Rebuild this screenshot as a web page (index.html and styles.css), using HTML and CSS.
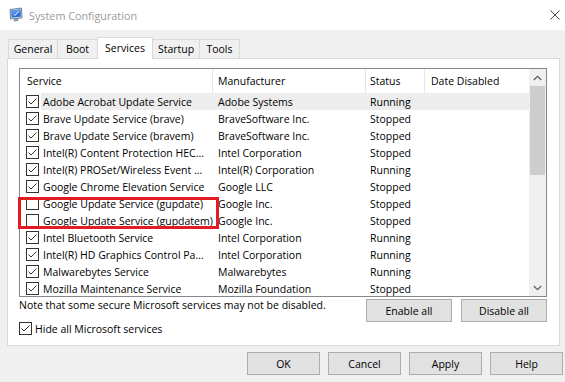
FILE: index.html
```html
<!DOCTYPE html>
<html>
<head>
<meta charset="utf-8">
<title>System Configuration</title>
<link rel="stylesheet" href="styles.css">
</head>
<body>
<div class="titlebar">
  <svg class="app-icon" viewBox="0 0 16 16" width="16" height="16">
    <path d="M2 2.5 L13.5 1 L14 11 L2.5 12 Z" fill="#c9d3e3" stroke="#5b6b86" stroke-width="0.8"/>
    <path d="M3.3 3.5 L12.5 2.4 L12.8 9.8 L3.6 10.6 Z" fill="#2f6fd6"/>
    <path d="M3.3 3.5 L12.5 2.4 L12.6 5 L3.4 7 Z" fill="#5d95ea"/>
    <path d="M5.5 7 L7 8.5 L10.5 4.5" fill="none" stroke="#ffffff" stroke-width="1"/>
    <path d="M6 12 L10 11.7 L10.5 14 L5.5 14.4 Z" fill="#8c97a8"/>
  </svg>
  <span class="title">System Configuration</span>
  <svg class="close" viewBox="0 0 10 10" width="10" height="10">
    <path d="M0.5 0.5 L9.5 9.5 M9.5 0.5 L0.5 9.5" stroke="#333" stroke-width="0.9" fill="none"/>
  </svg>
</div>

<div class="tabs">
  <div class="tab tab-general">General</div>
  <div class="tab tab-boot">Boot</div>
  <div class="tab tab-services active">Services</div>
  <div class="tab tab-startup">Startup</div>
  <div class="tab tab-tools">Tools</div>
</div>

<div class="panel">
  <div class="listview">
    <div class="lv-body">
      <div class="lv-header">
        <div class="h h1">Service</div>
        <div class="h h2">Manufacturer</div>
        <div class="h h3">Status</div>
        <div class="h h4">Date Disabled</div>
      </div>
      <div class="lv-rows">
        <div class="row">
          <div class="cb-cell"><span class="cb checked"><svg viewBox="0 0 11 11" width="11" height="11"><path d="M1.5 5.5 L4 8 L9.5 2.5" fill="none" stroke="#333" stroke-width="1"/></svg></span></div>
          <div class="row-main selected"><span class="c1">Adobe Acrobat Update Service</span><span class="c2">Adobe Systems</span><span class="c3">Running</span><span class="c4"></span></div>
        </div>
        <div class="row">
          <div class="cb-cell"><span class="cb checked"><svg viewBox="0 0 11 11" width="11" height="11"><path d="M1.5 5.5 L4 8 L9.5 2.5" fill="none" stroke="#333" stroke-width="1"/></svg></span></div>
          <div class="row-main"><span class="c1">Brave Update Service (brave)</span><span class="c2">BraveSoftware Inc.</span><span class="c3">Stopped</span><span class="c4"></span></div>
        </div>
        <div class="row">
          <div class="cb-cell"><span class="cb checked"><svg viewBox="0 0 11 11" width="11" height="11"><path d="M1.5 5.5 L4 8 L9.5 2.5" fill="none" stroke="#333" stroke-width="1"/></svg></span></div>
          <div class="row-main"><span class="c1">Brave Update Service (bravem)</span><span class="c2">BraveSoftware Inc.</span><span class="c3">Stopped</span><span class="c4"></span></div>
        </div>
        <div class="row">
          <div class="cb-cell"><span class="cb checked"><svg viewBox="0 0 11 11" width="11" height="11"><path d="M1.5 5.5 L4 8 L9.5 2.5" fill="none" stroke="#333" stroke-width="1"/></svg></span></div>
          <div class="row-main"><span class="c1">Intel(R) Content Protection HEC…</span><span class="c2">Intel Corporation</span><span class="c3">Stopped</span><span class="c4"></span></div>
        </div>
        <div class="row">
          <div class="cb-cell"><span class="cb checked"><svg viewBox="0 0 11 11" width="11" height="11"><path d="M1.5 5.5 L4 8 L9.5 2.5" fill="none" stroke="#333" stroke-width="1"/></svg></span></div>
          <div class="row-main"><span class="c1">Intel(R) PROSet/Wireless Event …</span><span class="c2">Intel(R) Corporation</span><span class="c3">Running</span><span class="c4"></span></div>
        </div>
        <div class="row">
          <div class="cb-cell"><span class="cb checked"><svg viewBox="0 0 11 11" width="11" height="11"><path d="M1.5 5.5 L4 8 L9.5 2.5" fill="none" stroke="#333" stroke-width="1"/></svg></span></div>
          <div class="row-main"><span class="c1">Google Chrome Elevation Service</span><span class="c2">Google LLC</span><span class="c3">Stopped</span><span class="c4"></span></div>
        </div>
        <div class="row">
          <div class="cb-cell"><span class="cb"></span></div>
          <div class="row-main"><span class="c1">Google Update Service (gupdate)</span><span class="c2">Google Inc.</span><span class="c3">Stopped</span><span class="c4"></span></div>
        </div>
        <div class="row">
          <div class="cb-cell"><span class="cb"></span></div>
          <div class="row-main"><span class="c1">Google Update Service (gupdatem)</span><span class="c2">Google Inc.</span><span class="c3">Stopped</span><span class="c4"></span></div>
        </div>
        <div class="row">
          <div class="cb-cell"><span class="cb checked"><svg viewBox="0 0 11 11" width="11" height="11"><path d="M1.5 5.5 L4 8 L9.5 2.5" fill="none" stroke="#333" stroke-width="1"/></svg></span></div>
          <div class="row-main"><span class="c1">Intel Bluetooth Service</span><span class="c2">Intel Corporation</span><span class="c3">Running</span><span class="c4"></span></div>
        </div>
        <div class="row">
          <div class="cb-cell"><span class="cb checked"><svg viewBox="0 0 11 11" width="11" height="11"><path d="M1.5 5.5 L4 8 L9.5 2.5" fill="none" stroke="#333" stroke-width="1"/></svg></span></div>
          <div class="row-main"><span class="c1">Intel(R) HD Graphics Control Pa…</span><span class="c2">Intel Corporation</span><span class="c3">Running</span><span class="c4"></span></div>
        </div>
        <div class="row">
          <div class="cb-cell"><span class="cb checked"><svg viewBox="0 0 11 11" width="11" height="11"><path d="M1.5 5.5 L4 8 L9.5 2.5" fill="none" stroke="#333" stroke-width="1"/></svg></span></div>
          <div class="row-main"><span class="c1">Malwarebytes Service</span><span class="c2">Malwarebytes</span><span class="c3">Running</span><span class="c4"></span></div>
        </div>
        <div class="row">
          <div class="cb-cell"><span class="cb checked"><svg viewBox="0 0 11 11" width="11" height="11"><path d="M1.5 5.5 L4 8 L9.5 2.5" fill="none" stroke="#333" stroke-width="1"/></svg></span></div>
          <div class="row-main"><span class="c1">Mozilla Maintenance Service</span><span class="c2">Mozilla Foundation</span><span class="c3">Stopped</span><span class="c4"></span></div>
        </div>
      </div>
    </div>
    <div class="scrollbar">
      <div class="sb-btn"><svg viewBox="0 0 9 6" width="9" height="6"><path d="M0.8 5 L4.5 1.3 L8.2 5" fill="none" stroke="#606060" stroke-width="1.3"/></svg></div>
      <div class="sb-track"><div class="sb-thumb"></div></div>
      <div class="sb-btn"><svg viewBox="0 0 9 6" width="9" height="6"><path d="M0.8 1 L4.5 4.7 L8.2 1" fill="none" stroke="#606060" stroke-width="1.3"/></svg></div>
    </div>
    <div class="mark-box"></div>
  </div>

  <div class="actions">
    <span class="note">Note that some secure Microsoft services may not be disabled.</span>
    <div class="action-btns">
      <button class="btn btn-wide">Enable all</button>
      <button class="btn btn-wide">Disable all</button>
    </div>
  </div>

  <div class="hide-row">
    <span class="cb checked"><svg viewBox="0 0 11 11" width="11" height="11"><path d="M1.5 5.5 L4 8 L9.5 2.5" fill="none" stroke="#333" stroke-width="1"/></svg></span>
    <span class="hide-label">Hide all Microsoft services</span>
  </div>
</div>

<div class="footer">
  <button class="btn">OK</button>
  <button class="btn">Cancel</button>
  <button class="btn">Apply</button>
  <button class="btn">Help</button>
</div>
</body>
</html>
```

FILE: styles.css
```css
* { box-sizing: border-box; }
html, body { margin: 0; padding: 0; }
body {
  width: 565px;
  height: 382px;
  overflow: hidden;
  background: #f0f0f0;
  font-family: "Open Sans", "Noto Sans", sans-serif;
  font-size: 10.5px;
  color: #000;
}

/* title bar */
.titlebar {
  height: 30px;
  background: #fff;
  display: flex;
  align-items: center;
  padding-left: 8px;
}
.app-icon { flex: none; }
.title {
  margin-left: 5px;
  color: #9a9a9a;
  font-size: 10.8px;
}
.close {
  margin-left: auto;
  margin-right: 5px;
  flex: none;
}

/* tabs */
.tabs {
  display: flex;
  align-items: flex-end;
  height: 21px;
  margin-top: 7px;
  padding-left: 8px;
}
.tab {
  height: 19px;
  border: 1px solid #d9d9d9;
  border-bottom: none;
  margin-right: -1px;
  display: flex;
  align-items: center;
  justify-content: center;
  background: #f0f0f0;
  white-space: nowrap;
}
.tab-general { width: 50px; }
.tab-boot { width: 41px; }
.tab-services { width: 56px; }
.tab-startup { width: 48px; }
.tab-tools { width: 41px; }
.tab.active {
  height: 22px;
  background: #fff;
  margin-bottom: -1px;
  padding-bottom: 2px;
  position: relative;
  z-index: 1;
}

/* panel */
.panel {
  margin-left: 7px;
  width: 553px;
  height: 288px;
  background: #fff;
  border: 1px solid #d9d9d9;
  padding: 9px 0 0 11px;
}

/* list view */
.listview {
  width: 528px;
  height: 229px;
  border: 1px solid #828790;
  display: flex;
  position: relative;
}
.lv-body {
  flex: 1;
  overflow: hidden;
  display: flex;
  flex-direction: column;
}
.lv-header {
  height: 24px;
  flex: none;
  display: flex;
}
.h {
  display: flex;
  align-items: center;
  border-right: 1px solid #e5e5e5;
  white-space: nowrap;
  color: #000;
}
.h1 { width: 193px; padding-left: 7px; }
.h2 { width: 153px; padding-left: 5px; }
.h3 { width: 59px; padding-left: 4px; }
.h4 { flex: 1; padding-left: 6px; border-right: none; }

.row {
  height: 17px;
  flex: none;
  display: flex;
  align-items: center;
}
.cb-cell {
  width: 21px;
  height: 17px;
  padding-left: 6px;
  display: flex;
  align-items: center;
  flex: none;
}
.cb {
  width: 13px;
  height: 13px;
  border: 1px solid #333;
  background: #fff;
  display: flex;
  align-items: center;
  justify-content: center;
  flex: none;
}
.cb svg { display: block; }
.row-main {
  flex: 1;
  height: 17px;
  display: flex;
  align-items: center;
  white-space: nowrap;
}
.row-main.selected { background: #ededed; }
.c1 { width: 172px; padding-left: 2px; flex: none; overflow: hidden; }
.c2 { width: 153px; padding-left: 5px; flex: none; overflow: hidden; }
.c3 { width: 59px; padding-left: 4px; flex: none; }
.c4 { flex: 1; }

/* scrollbar */
.scrollbar {
  width: 17px;
  flex: none;
  background: #f0f0f0;
  display: flex;
  flex-direction: column;
}
.sb-btn {
  height: 17px;
  flex: none;
  display: flex;
  align-items: center;
  justify-content: center;
}
.sb-track {
  flex: 1;
  padding: 0 1px;
}
.sb-thumb {
  height: 89px;
  background: #cdcdcd;
}

/* annotation */
.mark-box {
  position: absolute;
  left: -2px;
  top: 128px;
  width: 201px;
  height: 32px;
  border: 3px solid #e31b23;
  z-index: 2;
}

/* actions */
.actions {
  width: 528px;
  height: 25px;
  display: flex;
  justify-content: space-between;
  align-items: flex-start;
}
.note {
  line-height: 16px;
  white-space: nowrap;
}
.action-btns {
  display: flex;
  gap: 9px;
  margin-top: 2px;
}
.btn {
  height: 23px;
  width: 73px;
  padding: 0;
  margin: 0;
  background: #e1e1e1;
  border: 1px solid #adadad;
  font-family: inherit;
  font-size: inherit;
  color: #000;
}
.btn-wide { width: 86px; }

.hide-row {
  height: 13px;
  display: flex;
  align-items: center;
  gap: 3px;
}
.hide-label { white-space: nowrap; }

/* footer */
.footer {
  display: flex;
  gap: 8px;
  margin-top: 6px;
  padding-left: 247px;
}
```
